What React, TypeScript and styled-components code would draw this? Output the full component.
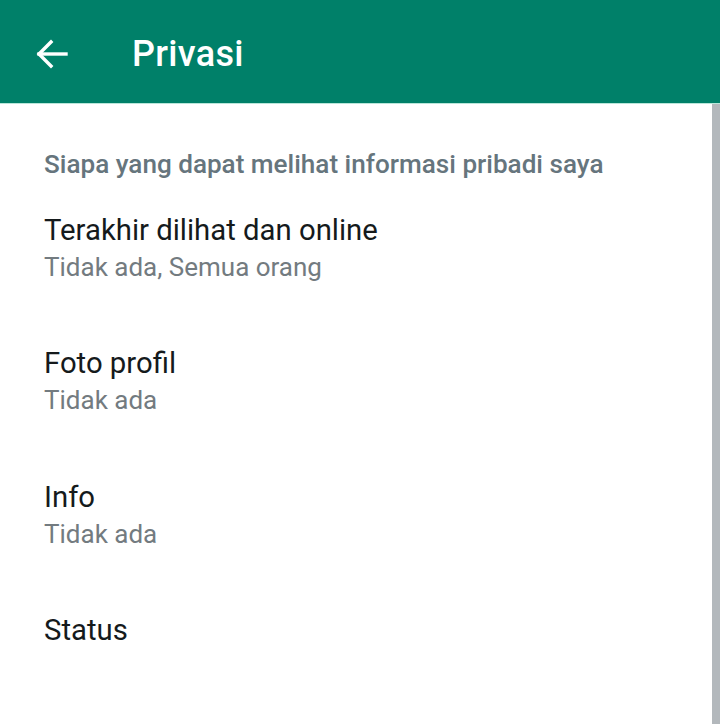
import React from "react";
import styled, { createGlobalStyle } from "styled-components";

const Global = createGlobalStyle`
  html, body { margin: 0; padding: 0; background: #ffffff; }
  body { font-family: Roboto, "Noto Sans", sans-serif; }
`;

const Page = styled.div`
  width: 720px;
  height: 724px;
  display: flex;
  flex-direction: column;
  overflow: hidden;
  background: #ffffff;
`;

const Header = styled.header`
  height: 104px;
  box-sizing: border-box;
  padding: 4px 0 0 34px;
  flex: none;
  background: #008069;
  border-bottom: 1px solid #b9e6d9;
  display: flex;
  align-items: center;
  gap: 62px;
`;

const BackButton = styled.button`
  width: 36px;
  height: 36px;
  padding: 0;
  border: 0;
  background: none;
  display: flex;
  align-items: center;
  justify-content: center;
`;

const Title = styled.h1`
  margin: 0;
  color: #ffffff;
  font-family: Roboto, sans-serif;
  font-weight: 500;
  font-size: 36px;
  letter-spacing: 0.3px;
`;

const Body = styled.div`
  flex: 1;
  display: flex;
`;

const Content = styled.main`
  flex: 1;
  padding: 44px 0 0 44px;
`;

const ScrollEdge = styled.div`
  width: 8px;
  flex: none;
  background: #b3b8bc;
`;

const SectionHeading = styled.h2`
  margin: 0 0 32px;
  font-family: Roboto, sans-serif;
  font-weight: 500;
  font-size: 26.1px;
  line-height: 32px;
  color: #66757d;
`;

const List = styled.ul`
  list-style: none;
  margin: 0;
  padding: 0;
  display: flex;
  flex-direction: column;
`;

const Item = styled.li`
  height: 133.3px;
  display: flex;
  flex-direction: column;
`;

const ItemTitle = styled.div`
  font-family: Roboto, sans-serif;
  font-size: 29.3px;
  line-height: 36px;
  color: #151a1c;
`;

const ItemSub = styled.div`
  font-family: Roboto, sans-serif;
  font-size: 26px;
  line-height: 38px;
  color: #737b80;
`;

const items = [
  { title: "Terakhir dilihat dan online", sub: "Tidak ada, Semua orang" },
  { title: "Foto profil", sub: "Tidak ada" },
  { title: "Info", sub: "Tidak ada" },
  { title: "Status" },
];

const BackArrow = () => (
  <svg width="36" height="36" viewBox="0 0 36 36" fill="none" stroke="#ffffff" strokeWidth="3.4" strokeLinecap="square">
    <line x1="5" y1="18" x2="32" y2="18" />
    <polyline points="17,6 5,18 17,30" strokeLinejoin="miter" />
  </svg>
);

export default function App() {
  return (
    <Page>
      <Global />
      <Header>
        <BackButton aria-label="Kembali">
          <BackArrow />
        </BackButton>
        <Title>Privasi</Title>
      </Header>
      <Body>
        <Content>
          <SectionHeading>Siapa yang dapat melihat informasi pribadi saya</SectionHeading>
          <List>
            {items.map((it) => (
              <Item key={it.title}>
                <ItemTitle>{it.title}</ItemTitle>
                {it.sub && <ItemSub>{it.sub}</ItemSub>}
              </Item>
            ))}
          </List>
        </Content>
        <ScrollEdge />
      </Body>
    </Page>
  );
}
